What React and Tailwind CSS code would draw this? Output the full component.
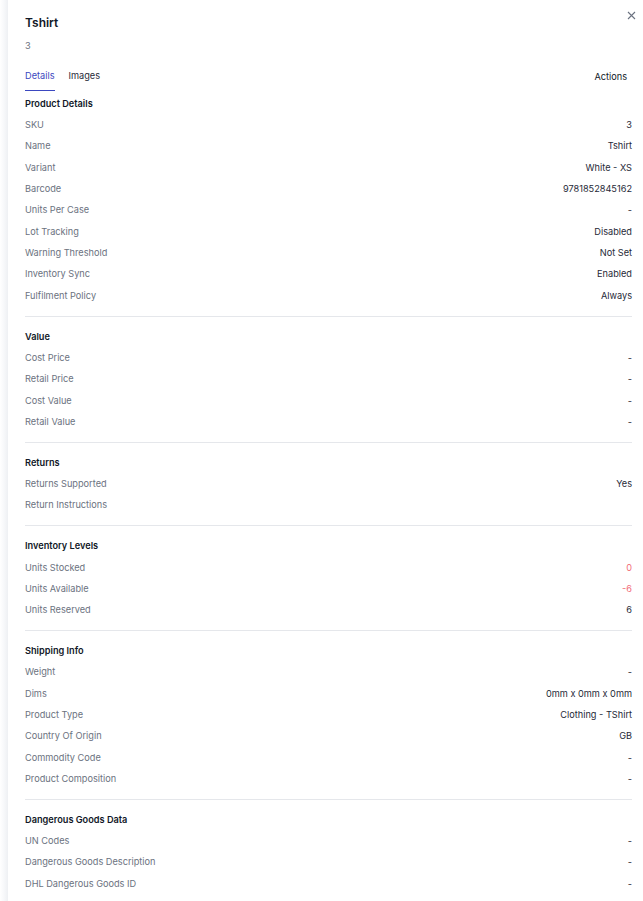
import React from "react";

const sections = [
  {
    title: "Product Details",
    rows: [
      ["SKU", "3"],
      ["Name", "Tshirt"],
      ["Variant", "White - XS"],
      ["Barcode", "9781852845162"],
      ["Units Per Case", "-"],
      ["Lot Tracking", "Disabled"],
      ["Warning Threshold", "Not Set"],
      ["Inventory Sync", "Enabled"],
      ["Fulfilment Policy", "Always"],
    ],
  },
  {
    title: "Value",
    rows: [
      ["Cost Price", "-"],
      ["Retail Price", "-"],
      ["Cost Value", "-"],
      ["Retail Value", "-"],
    ],
  },
  {
    title: "Returns",
    rows: [
      ["Returns Supported", "Yes"],
      ["Return Instructions", ""],
    ],
  },
  {
    title: "Inventory Levels",
    rows: [
      ["Units Stocked", "0", "red"],
      ["Units Available", "-6", "red"],
      ["Units Reserved", "6"],
    ],
  },
  {
    title: "Shipping Info",
    rows: [
      ["Weight", "-"],
      ["Dims", "0mm x 0mm x 0mm"],
      ["Product Type", "Clothing - TShirt"],
      ["Country Of Origin", "GB"],
      ["Commodity Code", "-"],
      ["Product Composition", "-"],
    ],
  },
  {
    title: "Dangerous Goods Data",
    rows: [
      ["UN Codes", "-"],
      ["Dangerous Goods Description", "-"],
      ["DHL Dangerous Goods ID", "-"],
    ],
  },
];

export default function App() {
  return (
    <div
      className="min-h-[901px] w-full bg-white flex"
      style={{ fontFamily: "Inter, 'Noto Sans', sans-serif" }}
    >
      <div className="w-[8px] shrink-0 bg-gradient-to-r from-white via-[#f7f8fa] to-[#eef0f3]" />
      <div className="relative flex-1 bg-white pl-[17px] pr-[11px] pt-[15px] pb-[10px]">
        <button className="absolute top-[11px] right-[7px] w-[9px] h-[9px] flex items-center justify-center">
          <svg width="9" height="9" viewBox="0 0 9 9" fill="none">
            <path d="M1 1L8 8M8 1L1 8" stroke="#6b7280" strokeWidth="1.1" />
          </svg>
        </button>
        <h1 className="text-[12px] leading-[15px] font-semibold text-[#111827]">Tshirt</h1>
        <div className="mt-[9px] text-[9.2px] leading-[14px] text-[#6b7280]">3</div>
        <div className="mt-[16px] flex items-start justify-between">
          <div className="flex gap-[14px] text-[9.2px] leading-[14px]">
            <div className="pb-[7px] border-b-[1.5px] border-[#3b48c0] text-[#3b48c0]">Details</div>
            <div className="text-[#1f2937]">Images</div>
          </div>
          <div className="pr-[5px] pt-[1px] text-[9.2px] leading-[14px] text-[#111827]">Actions</div>
        </div>
        <div className="mt-[2px]">
          {sections.map((s, i) => (
            <div key={s.title}>
              {i > 0 && <div className="mt-[9.5px] mb-[9px] h-px bg-[#e5e7eb]" />}
              <div className="h-[21.33px] flex items-center text-[9.2px] font-semibold text-[#111827]">
                {s.title}
              </div>
              {s.rows.map(([k, v, c]) => (
                <div key={k} className="h-[21.33px] flex items-center justify-between text-[9.2px]">
                  <span className="text-[#6b7280]">{k}</span>
                  <span className={c === "red" ? "text-[#f26b78]" : "text-[#1f2937]"}>{v}</span>
                </div>
              ))}
            </div>
          ))}
        </div>
      </div>
    </div>
  );
}
